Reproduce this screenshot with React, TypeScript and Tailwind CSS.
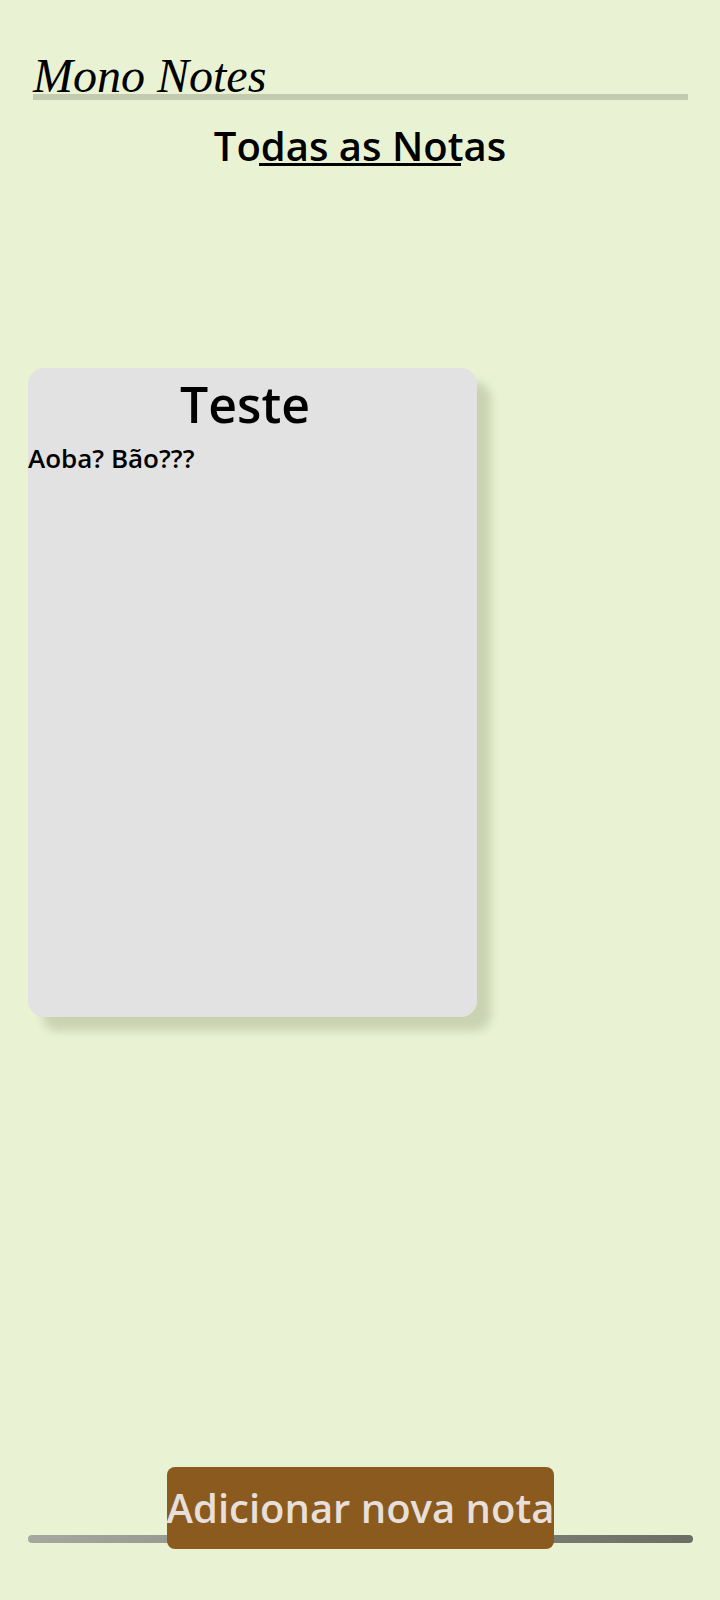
import React from "react";

export default function App() {
  return (
    <div className="min-h-[1600px] bg-[#e9f3d4] flex flex-col font-['Open_Sans',sans-serif] text-black">
      <header className="px-[33px] pt-[58px] pr-[32px]">
        <h1 className="font-['Liberation_Serif',serif] italic text-[48px] leading-[36px] border-b-[6px] border-[#c3cab0]">
          Mono Notes
        </h1>
      </header>

      <div className="flex justify-center mt-[26px]">
        <h2 className="relative text-[40px] leading-none font-semibold">
          Todas as Notas
          <span className="absolute bottom-0 left-1/2 -translate-x-1/2 w-[202px] h-[3px] bg-black" />
        </h2>
      </div>

      <section className="mt-[202px] ml-[28px]">
        <article className="w-[449px] h-[649px] bg-[#e2e2e2] rounded-[16px] shadow-[14px_14px_10px_#c9d3b2] pt-[11px]">
          <h3 className="text-center pr-[15px] text-[50px] leading-none font-semibold">Teste</h3>
          <p className="mt-[16px] text-[26px] leading-none font-semibold">Aoba? Bão???</p>
        </article>
      </section>

      <div className="mt-auto mb-[51px] ml-[28px] mr-[27px] grid">
        <div className="[grid-area:1/1] self-end mb-[6px] h-[8px] rounded-full bg-gradient-to-r from-[#a5a89f] to-[#6b6f63]" />
        <button className="[grid-area:1/1] justify-self-center h-[82px] flex items-center bg-[#8b5a1e] rounded-[8px] text-[#e6dfda] text-[40px] leading-none font-semibold whitespace-nowrap">
          Adicionar nova nota
        </button>
      </div>
    </div>
  );
}
